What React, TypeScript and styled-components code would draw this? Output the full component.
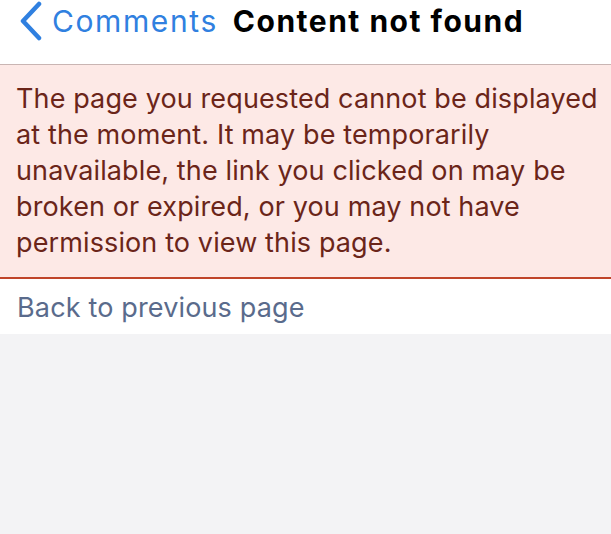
import React from "react";
import styled, { createGlobalStyle } from "styled-components";

const GlobalStyle = createGlobalStyle`
  html, body {
    margin: 0;
    padding: 0;
    background: #f3f3f5;
    font-family: Inter, "Noto Sans", sans-serif;
  }
`;

const Page = styled.div`
  width: 611px;
  min-height: 534px;
  background: #f3f3f5;
`;

const NavBar = styled.header`
  display: flex;
  align-items: center;
  height: 65px;
  padding: 0 0 23px 18px;
  background: #ffffff;
  border-bottom: 1px solid #c9b5b3;
  box-sizing: border-box;
`;

const BackLink = styled.a`
  display: flex;
  align-items: center;
  gap: 9px;
  color: #3080e0;
  font-size: 30px;
  text-decoration: none;
  letter-spacing: 1.6px;
`;

const Title = styled.h1`
  margin: 0 0 0 15px;
  font-size: 30px;
  font-weight: 700;
  color: #000000;
  letter-spacing: 1.5px;
`;

const Alert = styled.div`
  background: #fde9e6;
  border-bottom: 2px solid #c0452a;
  padding: 16px 0 16px 16px;
  color: #6b2519;
  font-size: 27px;
  line-height: 36px;
  letter-spacing: 0.12px;
`;

const AlertLine = styled.span`
  display: block;
  white-space: nowrap;
`;

const LinkRow = styled.div`
  background: #ffffff;
  height: 55px;
  display: flex;
  align-items: center;
  padding: 2px 0 0 17px;
  box-sizing: border-box;
  font-size: 27px;
  letter-spacing: 0.15px;
  color: #5a6b8c;
`;

const Chevron = () => (
  <svg width="25" height="40" viewBox="0 0 25 40">
    <path
      d="M21 3 L5 20 L21 37"
      fill="none"
      stroke="#3080e0"
      strokeWidth="4.5"
      strokeLinecap="round"
      strokeLinejoin="round"
    />
  </svg>
);

const message = [
  "The page you requested cannot be displayed",
  "at the moment. It may be temporarily",
  "unavailable, the link you clicked on may be",
  "broken or expired, or you may not have",
  "permission to view this page.",
];

const App = () => {
  return (
    <Page>
      <GlobalStyle />
      <NavBar>
        <BackLink href="#">
          <Chevron />
          Comments
        </BackLink>
        <Title>Content not found</Title>
      </NavBar>
      <Alert>
        {message.map((line) => (
          <AlertLine key={line}>{line}</AlertLine>
        ))}
      </Alert>
      <LinkRow>Back to previous page</LinkRow>
    </Page>
  );
};

export default App;
